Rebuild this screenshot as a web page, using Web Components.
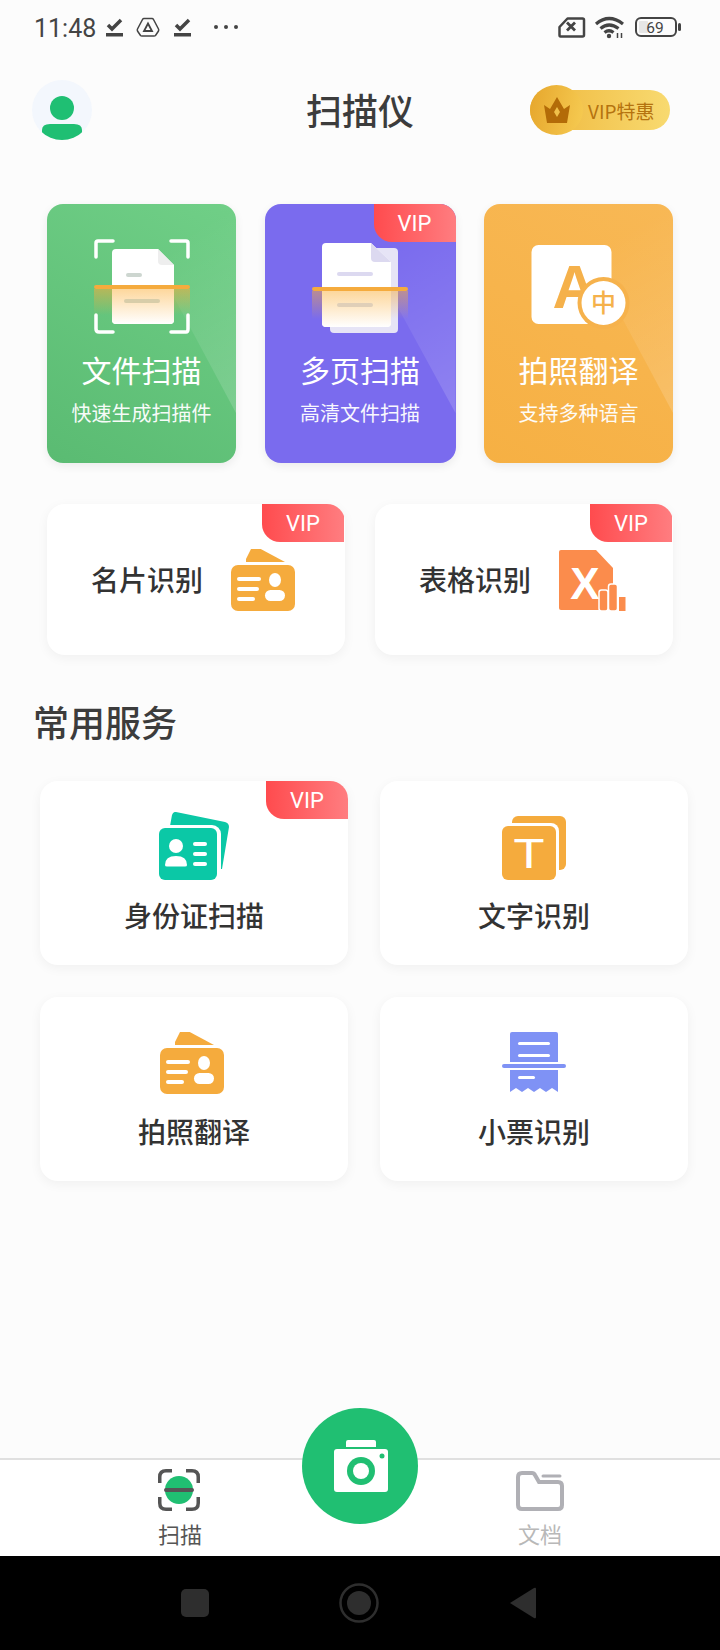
<!DOCTYPE html>
<html lang="zh">
<head>
<meta charset="utf-8">
<title>扫描仪</title>
<style>
  html, body { margin: 0; padding: 0; }
  body {
    width: 720px;
    height: 1650px;
    display: flex;
    flex-direction: column;
    overflow: hidden;
    background: #fcfcfc;
    color: #333;
    font-family: "Noto Sans CJK SC", "Noto Sans", sans-serif;
  }
  .spacer { flex: 1; }
  svg text { font-family: "Noto Sans CJK SC", "Noto Sans", sans-serif; }
</style>
</head>
<body>

<status-bar></status-bar>
<app-header></app-header>

<tile-row>
  <scan-tile color="green" heading="文件扫描" sub="快速生成扫描件">
    <svg slot="icon" width="96" height="96" viewBox="93 239 96 96">
      <defs>
        <linearGradient id="glow1" x1="0" y1="0" x2="0" y2="1"><stop offset="0" stop-color="#f5ab3d" stop-opacity=".55"/><stop offset="1" stop-color="#f5ab3d" stop-opacity="0"/></linearGradient>
        <linearGradient id="docfade1" x1="0" y1="0" x2="0" y2="1"><stop offset="0" stop-color="#fdd79c"/><stop offset="1" stop-color="#fff"/></linearGradient>
      </defs>
      <path d="M95 257v-14q0-2 2-2h15M170 241h15q2 0 2 2v14M95 315v14q0 3 3 3h14M170 332h15q2 0 2-3v-14" fill="none" stroke="#fff" stroke-width="3.5" stroke-linecap="round"/>
      <path d="M115 249h42l16 16v55q0 4-4 4h-54q-4 0-4-4v-67q0-4 4-4z" fill="#fff"/>
      <path d="M157 249l16 16h-12q-4 0-4-4z" fill="#eee"/>
      <rect x="93" y="289" width="96" height="26" fill="url(#glow1)"/>
      <path d="M111 289h62v31q0 4-4 4h-54q-4 0-4-4z" fill="url(#docfade1)"/>
      <rect x="125" y="273" width="16" height="4" rx="2" fill="#cdd6d0"/>
      <rect x="123" y="299" width="36" height="4" rx="2" fill="#d8cda9"/>
      <rect x="93" y="285" width="96" height="4" rx="2" fill="#f5ab3d"/>
    </svg>
  </scan-tile>
  <scan-tile color="purple" heading="多页扫描" sub="高清文件扫描" vip>
    <svg slot="icon" width="96" height="96" viewBox="312 239 96 96">
      <defs>
        <linearGradient id="glow2" x1="0" y1="0" x2="0" y2="1"><stop offset="0" stop-color="#f5ab3d" stop-opacity=".5"/><stop offset="1" stop-color="#f5ab3d" stop-opacity="0"/></linearGradient>
        <linearGradient id="docfade2" x1="0" y1="0" x2="0" y2="1"><stop offset="0" stop-color="#fdd79c"/><stop offset="1" stop-color="#fff"/></linearGradient>
      </defs>
      <rect x="330" y="248" width="68" height="85" rx="4" fill="#e6e4f6"/>
      <path d="M326 243h45l20 19v61q0 4-4 4h-61q-4 0-4-4v-76q0-4 4-4z" fill="#fff"/>
      <path d="M371 243l20 19h-16q-4 0-4-4z" fill="#dcd9f0"/>
      <rect x="312" y="291" width="96" height="28" fill="url(#glow2)"/>
      <path d="M322 291h69v32q0 4-4 4h-61q-4 0-4-4z" fill="url(#docfade2)"/>
      <rect x="337" y="272" width="36" height="4" rx="2" fill="#dcd9f0"/>
      <rect x="337" y="303" width="36" height="4" rx="2" fill="#e0cfb8"/>
      <rect x="312" y="287" width="96" height="4" rx="2" fill="#f5ab3d"/>
    </svg>
  </scan-tile>
  <scan-tile color="orange" heading="拍照翻译" sub="支持多种语言">
    <svg slot="icon" width="96" height="96" viewBox="530.5 239 96 96" style="overflow:visible">
      <rect x="531" y="245" width="80" height="79" rx="7" fill="#fff"/>
      <text x="574" y="308" text-anchor="middle" font-size="61" font-weight="700" fill="#f5b14b" style="font-family:'Liberation Sans',sans-serif">A</text>
      <circle cx="603" cy="303" r="26" fill="#f6b24c"/>
      <circle cx="603" cy="303" r="22" fill="#fff"/>
      <text x="603" y="312" text-anchor="middle" font-size="25" font-weight="500" fill="#f5b14b">中</text>
    </svg>
  </scan-tile>
</tile-row>

<wide-row>
  <wide-card label="名片识别" vip>
    <card-glyph slot="icon"></card-glyph>
  </wide-card>
  <wide-card label="表格识别" vip>
    <svg slot="icon" width="67" height="62" viewBox="559 547 67 62">
      <path d="M561 548h35l17 18v42h-52q-2 0-2-2v-56q0-2 2-2z" fill="#fb8c4c"/>
      <text x="585" y="597" text-anchor="middle" font-size="44" font-weight="700" fill="#fff" style="font-family:'Liberation Sans',sans-serif">X</text>
      <rect x="599" y="588" width="9" height="21" rx="2.5" fill="#fb8c4c" stroke="#fff" stroke-width="1.5"/>
      <rect x="608.5" y="582" width="9" height="27" rx="2.5" fill="#fb8c4c" stroke="#fff" stroke-width="1.5"/>
      <rect x="619" y="595" width="6.5" height="14" fill="#fb8c4c"/>
    </svg>
  </wide-card>
</wide-row>

<section-title>常用服务</section-title>

<service-grid>
  <service-card label="身份证扫描" vip>
    <svg slot="icon" width="70" height="68" viewBox="159 812 70 68">
      <path d="M170 826l2-11q1-3.500 4-3l49 10q4 1 4 5l-7 42h-10v-43z" fill="#0bc8a6"/>
      <rect x="156" y="825" width="65" height="58" rx="9" fill="#fff"/>
      <rect x="159" y="828" width="58" height="52" rx="6" fill="#0bc8a6"/>
      <circle cx="176" cy="846" r="7" fill="#fff"/>
      <path d="M165 865q0-9 11-9t11 9q0 1.500-2 1.500h-18q-2 0-2-1.500z" fill="#fff"/>
      <rect x="193" y="842" width="14" height="4" rx="2" fill="#fff"/>
      <rect x="193" y="852" width="14" height="4" rx="2" fill="#fff"/>
      <rect x="193" y="862" width="14" height="4" rx="2" fill="#fff"/>
    </svg>
  </service-card>
  <service-card label="文字识别">
    <svg slot="icon" width="70" height="68" viewBox="499 812 70 68">
      <rect x="512" y="816" width="54" height="54" rx="6" fill="#f5ab3d"/>
      <rect x="499" y="823" width="60" height="60" rx="8" fill="#fff"/>
      <rect x="502" y="826" width="54" height="54" rx="6" fill="#f5ab3d"/>
      <text x="514" y="868" textLength="30" lengthAdjust="spacingAndGlyphs" font-size="40" fill="#fff" style="font-family:'Noto Sans',sans-serif">T</text>
    </svg>
  </service-card>
  <service-card label="拍照翻译">
    <card-glyph slot="icon" class="shift"></card-glyph>
  </service-card>
  <service-card label="小票识别">
    <svg slot="icon" width="70" height="68" viewBox="499 1028 70 68">
      <path d="M512 1032h44q2 0 2 2v28h-48v-28q0-2 2-2z" fill="#7f92f5"/>
      <rect x="502" y="1064" width="64" height="4" rx="2" fill="#7f92f5"/>
      <path d="M510 1070h48v22l-6-4-6 4-6-4-6 4-6-4-6 4-6-4-6 4z" fill="#7f92f5"/>
      <rect x="518" y="1042" width="32" height="3" rx="1.500" fill="#fff"/>
      <rect x="518" y="1054" width="32" height="3" rx="1.500" fill="#fff"/>
      <rect x="518" y="1076" width="17" height="3" rx="1.500" fill="#fff"/>
    </svg>
  </service-card>
</service-grid>

<div class="spacer"></div>

<bottom-nav></bottom-nav>
<system-nav></system-nav>

<script>
  // small helper so each element only has to give its markup
  class Base extends HTMLElement {
    constructor(html) {
      super();
      this.attachShadow({ mode: 'open' }).innerHTML = html;
    }
  }

  class StatusBar extends Base {
    constructor() {
      super(`
      <style>
        :host { display: flex; height: 55px; flex: none; align-items: center; justify-content: space-between; padding: 0 38px 0 34px; color: #444; }
        .time { font: 400 25px Roboto, sans-serif; width: 72px; position: relative; top: 1px; }
        .side { display: flex; align-items: center; }
      </style>
      <div class="side">
        <span class="time">11:48</span>
        <svg width="132" height="40" viewBox="106 8 132 40" fill="none" stroke="#444">
          <path d="M108 25l4 4 9-9" stroke-width="3.500"/>
          <rect x="106" y="33" width="17" height="3.500" fill="#444" stroke="none"/>
          <path d="M144 18.500h8q1 0 1.500 1l5 9.500q.5 1 0 2l-3 4.500q-.5.500-1.500.500h-12q-1 0-1.500-.500l-3-4.500q-.5-1 0-2l5-9.500q.5-1 1.500-1z" stroke-width="1.500"/>
          <path d="M148 23.500l4 7.500h-8z" stroke-width="1.800"/>
          <path d="M176 25l4 4 9-9" stroke-width="3.500"/>
          <rect x="174" y="33" width="17" height="3.500" fill="#444" stroke="none"/>
          <circle cx="216" cy="27" r="2" fill="#444" stroke="none"/>
          <circle cx="226" cy="27" r="2" fill="#444" stroke="none"/>
          <circle cx="236" cy="27" r="2" fill="#444" stroke="none"/>
        </svg>
      </div>
      <svg width="124" height="40" viewBox="558 8 124 40" fill="none" stroke="#444">
        <path d="M559.500 27l8-8.500h15q1.500 0 1.500 1.500v15q0 1.500-1.500 1.500h-22q-1 0-1-1.500z" stroke-width="2.500" stroke-linejoin="round"/>
        <path d="M567 22.500l8 8M575 22.500l-8 8" stroke-width="2.800"/>
        <path d="M596 24q13-11 27 0M600.500 28.500q8.500-7 18 0M604.500 32.500q4.500-3.500 9 0" stroke-width="3.200"/>
        <circle cx="609" cy="36" r="2.200" fill="#444" stroke="none"/>
        <path d="M617.500 33v5M621.500 33v5" stroke-width="1.500"/>
        <rect x="636" y="18" width="40" height="18" rx="5" stroke-width="2"/>
        <rect x="639" y="21" width="9" height="12" rx="1" fill="#e6e6e6" stroke="none"/>
        <text x="655" y="32.500" text-anchor="middle" font-size="15.500" fill="#444" stroke="none" style="font-family:Roboto,sans-serif">69</text>
        <rect x="678" y="23" width="3" height="8" rx="1.500" fill="#444" stroke="none"/>
      </svg>`);
    }
  }

  class AppHeader extends Base {
    constructor() {
      super(`
      <style>
        :host { display: grid; grid-template-columns: 1fr auto 1fr; align-items: center; flex: none; height: 60px; margin-top: 25px; padding: 0 32px; }
        .avatar { width: 60px; height: 60px; display: block; }
        h1 { margin: 0; font-size: 36px; font-weight: 500; color: #3c3c3c; line-height: 50px; position: relative; top: -1px; }
        .vip { justify-self: end; margin-right: 18px; display: flex; align-items: center; height: 40px; width: 140px; border-radius: 20px; position: relative; background: linear-gradient(90deg, #efb73c, #f8da70); }
        .coin { position: absolute; left: 0; top: -5px; width: 53px; height: 50px; border-radius: 50%; background: linear-gradient(100deg, #e6a62c, #f6cb52); display: flex; align-items: center; justify-content: center; }
        .vip span { margin-left: 58px; font-size: 19px; color: #b5730f; white-space: nowrap; }
      </style>
      <svg class="avatar" viewBox="0 0 60 60">
        <defs><clipPath id="round"><circle cx="30" cy="30" r="30"/></clipPath></defs>
        <circle cx="30" cy="30" r="30" fill="#f3f7fd"/>
        <circle cx="30" cy="28" r="12" fill="#1fbf73"/>
        <path d="M10 60V50q0-6 8-6h24q8 0 8 6v10z" fill="#1fbf73" clip-path="url(#round)"/>
      </svg>
      <h1>扫描仪</h1>
      <div class="vip">
        <div class="coin">
          <svg width="30" height="28" viewBox="0 0 30 28">
            <path d="M2 9l6 4 7-12 7 12 6-4-3 18H5z" fill="#b36b08"/>
            <path d="M15 11l3 5-3 5-3-5z" fill="#f0c04a"/>
          </svg>
        </div>
        <span>VIP特惠</span>
      </div>`);
    }
  }

  class VipRibbon extends Base {
    constructor() {
      super(`
      <style>
        :host { position: absolute; top: 0; right: var(--ribbon-right, 0); width: 82px; height: 38px; display: flex; align-items: center; justify-content: center; background: linear-gradient(90deg, #ff4b4e, #ff7d80); border-bottom-left-radius: 18px; color: #fff; font: 400 22px Roboto, sans-serif; }
      </style>
      VIP`);
    }
  }

  class TileRow extends Base {
    constructor() {
      super(`
      <style>
        :host { display: grid; grid-template-columns: 189px 191px 189px; gap: 28.500px; flex: none; height: 259px; margin-top: 64px; padding: 0 47px; }
      </style>
      <slot></slot>`);
    }
  }

  class ScanTile extends Base {
    constructor() {
      super(`
      <style>
        :host { display: block; position: relative; overflow: hidden; border-radius: 16px; box-shadow: 0 3px 10px rgba(0,0,0,.07); color: #fff; text-align: center; }
        :host([color=green]) { background: linear-gradient(30deg, #5abb72, #70cf87); }
        :host([color=purple]) { background: #7a6bee; }
        :host([color=orange]) { background: linear-gradient(30deg, #f6b043, #f8b855); }
        .facet { position: absolute; inset: 0; clip-path: polygon(77px 0, 100% 0, 100% 209px); background: linear-gradient(150deg, rgba(255,255,255,0) 30%, rgba(255,255,255,.2) 100%); }
        .body { position: relative; padding-top: 35px; }
        ::slotted(svg) { display: block; margin: 0 auto; }
        .h { margin-top: 14px; font-size: 30px; line-height: 40px; }
        .s { margin-top: 10px; font-size: 20px; line-height: 28px; opacity: .95; }
      </style>
      <div class="facet"></div>
      <div class="body">
        <slot name="icon"></slot>
        <div class="h"></div>
        <div class="s"></div>
      </div>`);
    }
    connectedCallback() {
      this.shadowRoot.querySelector('.h').textContent = this.getAttribute('heading');
      this.shadowRoot.querySelector('.s').textContent = this.getAttribute('sub');
      if (this.hasAttribute('vip')) this.shadowRoot.append(document.createElement('vip-ribbon'));
    }
  }

  class WideRow extends Base {
    constructor() {
      super(`
      <style>
        :host { display: grid; grid-template-columns: 1fr 1fr; gap: 30px; flex: none; height: 151px; margin-top: 41px; padding: 0 47px; }
      </style>
      <slot></slot>`);
    }
  }

  class WideCard extends Base {
    constructor() {
      super(`
      <style>
        :host { --ribbon-right: 1px; display: flex; align-items: center; gap: 28px; position: relative; overflow: hidden; padding-left: 44px; background: #fff; border-radius: 18px; box-shadow: 0 3px 12px rgba(0,0,0,.05); }
        .t { font-size: 28px; font-weight: 500; color: #333; line-height: 40px; position: relative; top: -1px; }
        ::slotted(*) { display: block; flex: none; }
      </style>
      <span class="t"></span>
      <slot name="icon"></slot>`);
    }
    connectedCallback() {
      this.shadowRoot.querySelector('.t').textContent = this.getAttribute('label');
      if (this.hasAttribute('vip')) this.shadowRoot.append(document.createElement('vip-ribbon'));
    }
  }

  class SectionTitle extends Base {
    constructor() {
      super(`
      <style>
        :host { display: block; flex: none; margin-top: 41px; padding-left: 33px; font-size: 36px; font-weight: 500; line-height: 50px; color: #3c3c3c; }
      </style>
      <slot></slot>`);
    }
  }

  class ServiceGrid extends Base {
    constructor() {
      super(`
      <style>
        :host { display: grid; grid-template-columns: 308px 308px; grid-auto-rows: 184px; gap: 32px; flex: none; margin-top: 35px; padding-left: 40px; }
      </style>
      <slot></slot>`);
    }
  }

  class ServiceCard extends Base {
    constructor() {
      super(`
      <style>
        :host { display: flex; flex-direction: column; align-items: center; position: relative; overflow: hidden; padding-top: 31px; background: #fff; border-radius: 18px; box-shadow: 0 3px 12px rgba(0,0,0,.05); }
        ::slotted(*) { display: block; }
        .t { margin-top: 15px; font-size: 28px; font-weight: 500; line-height: 40px; color: #333; }
      </style>
      <slot name="icon"></slot>
      <div class="t"></div>`);
    }
    connectedCallback() {
      this.shadowRoot.querySelector('.t').textContent = this.getAttribute('label');
      if (this.hasAttribute('vip')) this.shadowRoot.append(document.createElement('vip-ribbon'));
    }
  }

  // orange id card, used twice
  class CardGlyph extends Base {
    constructor() {
      super(`
      <style>
        :host { display: block; width: 64px; height: 62px; }
        :host(.shift) { margin: 4px 4px 2px 0; }
        svg { display: block; }
      </style>
      <svg width="64" height="62" viewBox="0 0 64 62">
        <path d="M15 13l5-10q2-4 6-2l28 15H15z" fill="#f5ab3d" transform="translate(0 -3)"/>
        <rect x="0" y="16" width="64" height="46" rx="7" fill="#f5ab3d"/>
        <rect x="6" y="28" width="24" height="4" rx="2" fill="#fff"/>
        <rect x="6" y="38" width="22" height="4" rx="2" fill="#fff"/>
        <rect x="6" y="48" width="18" height="4" rx="2" fill="#fff"/>
        <ellipse cx="44" cy="31" rx="6" ry="7" fill="#fff"/>
        <rect x="34" y="41" width="20" height="11" rx="5.500" fill="#fff"/>
      </svg>`);
    }
  }

  class BottomNav extends Base {
    constructor() {
      super(`
      <style>
        :host { display: grid; grid-template-columns: 1fr 1fr; flex: none; height: 96px; position: relative; background: #fff; border-top: 2px solid #e0e0e0; }
        .tab { display: flex; flex-direction: column; align-items: center; padding-top: 9px; font-size: 22px; line-height: 30px; color: #555; }
        .tab.off { color: #b8b8b8; }
        .tab svg { display: block; margin-bottom: 7px; }
        .tab .scan { margin-right: 2px; }
        .fab { position: absolute; left: 302px; top: -52px; width: 116px; height: 116px; border-radius: 50%; background: #20bf72; display: flex; align-items: center; justify-content: center; }
        .fab svg { margin-left: 2px; }
      </style>
      <div class="tab">
        <svg class="scan" width="42" height="42" viewBox="0 0 42 42">
          <circle cx="21" cy="21" r="14" fill="#20bf72"/>
          <path d="M14 1.750H8q-6.250 0-6.250 6.250v6M28 1.750h6q6.250 0 6.250 6.250v6M14 40.250H8q-6.250 0-6.250-6.250v-6M28 40.250h6q6.250 0 6.250-6.250v-6" fill="none" stroke="#555" stroke-width="3.500"/>
          <rect x="6" y="19" width="30" height="4" rx="2" fill="#555"/>
        </svg>
        <span>扫描</span>
      </div>
      <div class="tab off">
        <svg width="48" height="42" viewBox="0 0 48 42">
          <path d="M2 8q0-4 4-4h10q2 0 3 2l4 7h19q4 0 4 4v19q0 4-4 4H6q-4 0-4-4z" fill="none" stroke="#b0b0b5" stroke-width="4"/>
          <path d="M27 7h17" stroke="#b0b0b5" stroke-width="3" stroke-linecap="round"/>
        </svg>
        <span>文档</span>
      </div>
      <div class="fab">
        <svg width="54" height="52" viewBox="0 0 54 52">
          <path d="M12 2q0-2 2-2h26q2 0 2 2v5H12z" fill="#fff"/>
          <rect x="0" y="9" width="54" height="43" rx="3" fill="#fff"/>
          <circle cx="27" cy="31" r="14" fill="#20bf72"/>
          <circle cx="27" cy="31" r="8" fill="#fff"/>
          <circle cx="48" cy="16" r="2.500" fill="#20bf72"/>
        </svg>
      </div>`);
    }
  }

  class SystemNav extends Base {
    constructor() {
      super(`
      <style>
        :host { display: flex; flex: 1 0 94px; max-height: 94px; align-items: center; justify-content: space-between; padding: 0 184px 0 181px; background: #000; }
        svg { display: block; }
      </style>
      <svg width="28" height="28"><rect width="28" height="28" rx="5" fill="#2e2e2e"/></svg>
      <svg width="40" height="40" viewBox="0 0 40 40"><circle cx="20" cy="20" r="18.500" fill="none" stroke="#2e2e2e" stroke-width="2.500"/><circle cx="20" cy="20" r="12" fill="#2e2e2e"/></svg>
      <svg width="27" height="32" viewBox="0 0 27 32"><path d="M1 16L25 1q2-1 2 1v28q0 2-2 1z" fill="#2e2e2e"/></svg>`);
    }
  }

  customElements.define('vip-ribbon', VipRibbon);
  customElements.define('status-bar', StatusBar);
  customElements.define('app-header', AppHeader);
  customElements.define('tile-row', TileRow);
  customElements.define('scan-tile', ScanTile);
  customElements.define('wide-row', WideRow);
  customElements.define('wide-card', WideCard);
  customElements.define('section-title', SectionTitle);
  customElements.define('service-grid', ServiceGrid);
  customElements.define('service-card', ServiceCard);
  customElements.define('card-glyph', CardGlyph);
  customElements.define('bottom-nav', BottomNav);
  customElements.define('system-nav', SystemNav);
</script>
</body>
</html>
